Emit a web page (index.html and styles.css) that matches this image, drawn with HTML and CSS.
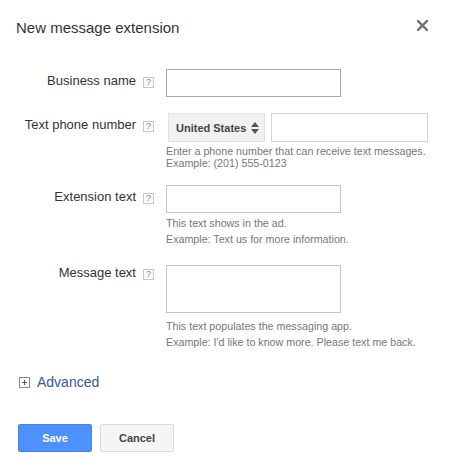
FILE: index.html
```html
<!DOCTYPE html>
<html>
<head>
<meta charset="utf-8">
<link rel="stylesheet" href="styles.css">
</head>
<body>
<div class="dialog">
  <div class="header">
    <h1 class="title">New message extension</h1>
    <svg class="close" width="11" height="11" viewBox="0 0 11 11"><path d="M1 1L10 10M10 1L1 10" stroke="#707070" stroke-width="2.4" stroke-linecap="square"/></svg>
  </div>

  <div class="form">
    <div class="label-cell"><span class="label">Business name</span><span class="help">?</span></div>
    <div class="field"><input class="text-input text-input--dark" type="text"></div>

    <div class="label-cell"><span class="label">Text phone number</span><span class="help">?</span></div>
    <div class="field">
      <div class="phone">
        <div class="select"><span>United States</span>
          <svg width="8" height="12" viewBox="0 0 8 12"><path d="M4 0L8 5H0Z M0 7H8L4 12Z" fill="#555"/></svg>
        </div>
        <input class="text-input phone-input" type="text">
      </div>
      <div class="hint">Enter a phone number that can receive text messages.<br>Example: (201) 555-0123</div>
    </div>

    <div class="label-cell"><span class="label">Extension text</span><span class="help">?</span></div>
    <div class="field field--gap">
      <input class="text-input" type="text">
      <div class="hint hint--spaced">This text shows in the ad.<br>Example: Text us for more information.</div>
    </div>

    <div class="label-cell label-cell--top"><span class="label">Message text</span><span class="help">?</span></div>
    <div class="field">
      <textarea class="text-input text-area"></textarea>
      <div class="hint hint--spaced hint--message">This text populates the messaging app.<br>Example: I'd like to know more. Please text me back.</div>
    </div>
  </div>

  <div class="advanced">
    <svg width="11" height="11" viewBox="0 0 11 11"><rect x="0.5" y="0.5" width="10" height="10" fill="none" stroke="#8a8a8a"/><path d="M3 5.5H8M5.5 3V8" stroke="#555"/></svg>
    <span class="advanced-link">Advanced</span>
  </div>

  <div class="actions">
    <button class="btn btn--primary">Save</button>
    <button class="btn">Cancel</button>
  </div>
</div>
</body>
</html>
```
FILE: styles.css
```css
body {
  margin: 0;
  background: #fff;
  font-family: "Liberation Sans", Arial, sans-serif;
  color: #333;
}

.dialog {
  width: 451px;
  height: 473px;
  box-sizing: border-box;
  padding: 19px 23px 0 16px;
}

.header {
  display: flex;
  justify-content: space-between;
  align-items: flex-start;
}

.title {
  margin: 0;
  font-size: 15px;
  line-height: 18px;
  font-weight: normal;
  color: #333;
}

.close {
  display: block;
  margin-top: 1px;
}

.form {
  display: grid;
  grid-template-columns: 138px 1fr;
  column-gap: 12px;
  row-gap: 16px;
  margin-top: 32px;
}

.label-cell {
  display: flex;
  justify-content: flex-end;
  align-items: flex-start;
  gap: 7px;
  padding-top: 4px;
}

.label-cell--top {
  padding-top: 0;
}

.label {
  font-size: 13px;
  line-height: 16px;
  color: #333;
  white-space: nowrap;
}

.help {
  display: block;
  width: 11px;
  height: 11px;
  box-sizing: border-box;
  margin-top: 4px;
  border: 1px solid #c8c8c8;
  background: #fafafa;
  font-size: 9px;
  line-height: 9px;
  text-align: center;
  color: #888;
}

.text-input {
  display: block;
  width: 175px;
  height: 28px;
  box-sizing: border-box;
  margin: 0;
  padding: 0 4px;
  border: 1px solid #c6c6c6;
  border-radius: 0;
  background: #fff;
  font-family: "Liberation Sans", Arial, sans-serif;
  font-size: 13px;
}

.text-input--dark {
  border-color: #a8a8a8;
}

.text-area {
  height: 48px;
  resize: none;
}

.phone {
  display: flex;
  gap: 6px;
  margin-left: 2px;
}

.select {
  display: flex;
  justify-content: space-between;
  align-items: center;
  width: 97px;
  height: 29px;
  box-sizing: border-box;
  padding: 0 5px 0 7px;
  background: #f1f1f1;
  border: 1px solid #e2e2e2;
  font-size: 11px;
  font-weight: bold;
  color: #444;
}

.select svg {
  display: block;
}

.phone-input {
  width: 157px;
  height: 29px;
  border-color: #d4d4d4;
}

.hint {
  margin-top: 3px;
  font-size: 10.7px;
  line-height: 12px;
  color: #777;
  white-space: nowrap;
}

.hint--spaced {
  margin-top: 2px;
  line-height: 16px;
}

.hint--message {
  margin-top: 5px;
}

.field--gap {
  margin-bottom: 2px;
}

.advanced {
  display: flex;
  align-items: center;
  gap: 7px;
  margin-top: 24px;
  margin-left: 3px;
}

.advanced svg {
  display: block;
}

.advanced-link {
  font-size: 14px;
  line-height: 16px;
  color: #38599a;
}

.actions {
  display: flex;
  gap: 8px;
  margin-top: 34px;
  margin-left: 2px;
}

.btn {
  width: 74px;
  height: 28px;
  box-sizing: border-box;
  margin: 0;
  padding: 0;
  border: 1px solid #dcdcdc;
  border-radius: 2px;
  background: #f5f5f5;
  font-family: "Liberation Sans", Arial, sans-serif;
  font-size: 11px;
  font-weight: bold;
  color: #444;
}

.btn--primary {
  background: #4d90fe;
  border-color: #3f84f2;
  color: #fff;
}
```
